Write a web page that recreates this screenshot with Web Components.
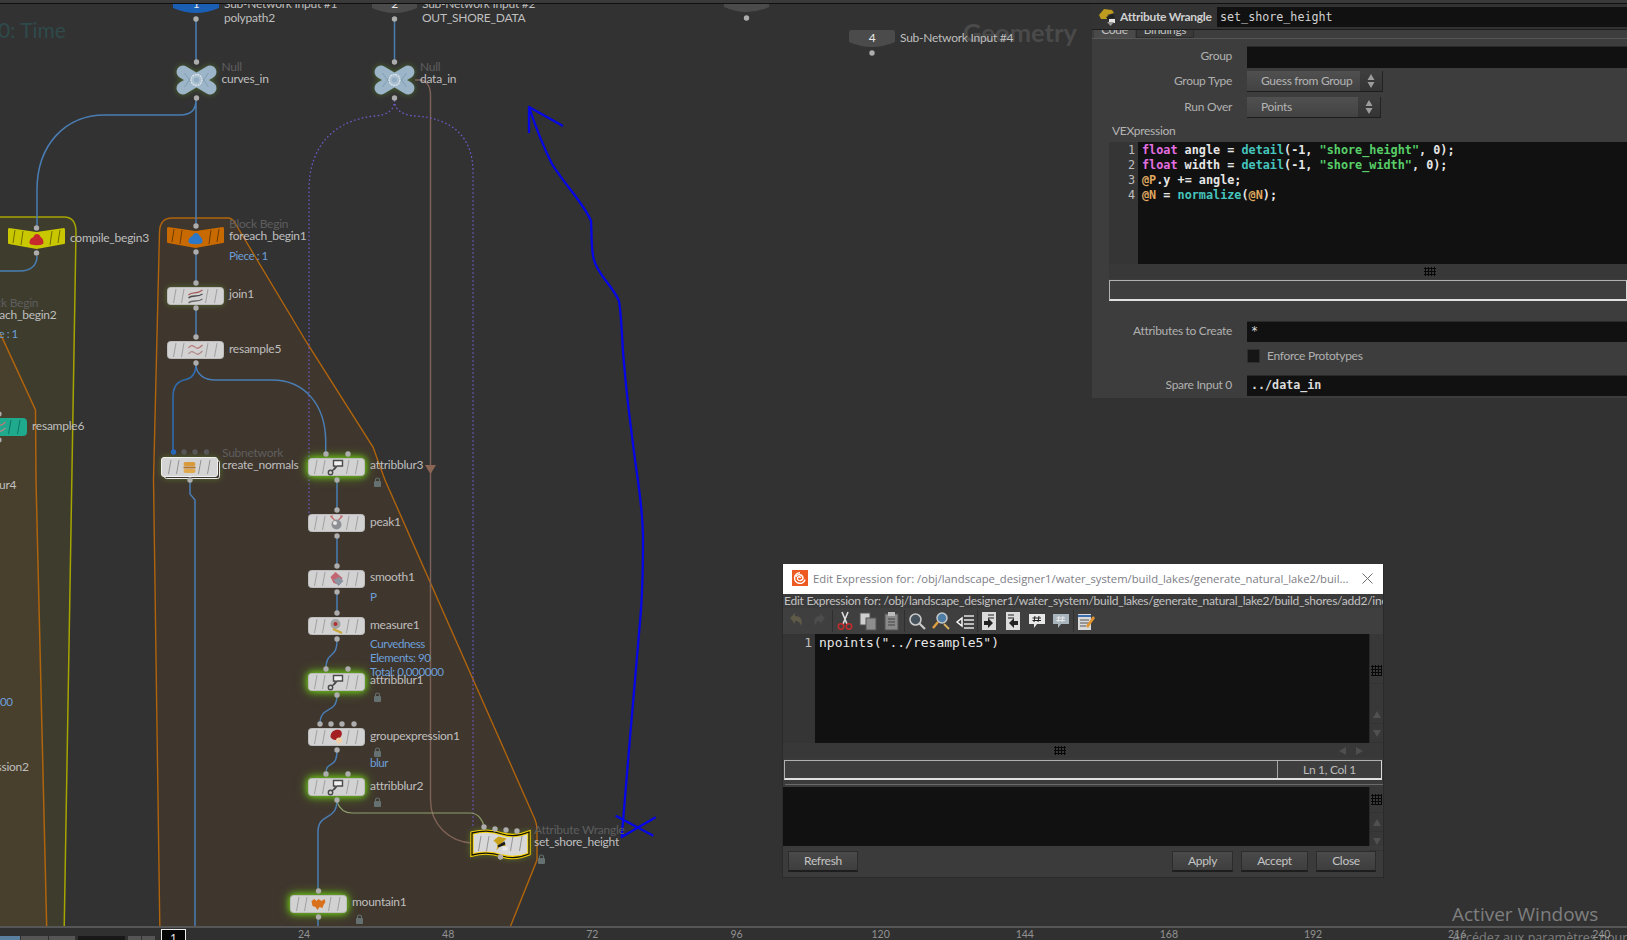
<!DOCTYPE html>
<html>
<head>
<meta charset="utf-8">
<title>Houdini network</title>
<style>
    html, body{ margin: 0; padding: 0; background: #323232; overflow: hidden; }
    body{ font-family: "Lato", "Noto Sans", sans-serif; }
    .k{ color: #e46fe0; }
    .f{ color: #45c5bd; }
    .s{ color: #58cf68; }
    .a{ color: #dfa75f; }
</style>
</head>
<body>

<hou-app>
    <hou-network slot="network">
        <hou-node x="173" y="-4" w="46" h="18" kind="input" fill="#1a5fb4" num="1" type="Sub-Network Input #1" name="polypath2" ly="22"></hou-node>
        <hou-node x="372" y="-4" w="45" h="18" kind="input" fill="#4b4b4b" num="2" type="Sub-Network Input #2" name="OUT_SHORE_DATA" ly="22"></hou-node>
        <hou-node x="724" y="-5" w="45" h="18" kind="input" fill="#4b4b4b"></hou-node>
        <hou-node x="849" y="30" w="46" h="18" kind="input" fill="#4b4b4b" num="4" name="Sub-Network Input #4" ly="8"></hou-node>

        <hou-node x="175.5" y="65" w="41" h="30" kind="null" type="Null" name="curves_in" ly="14" in="20.5:-3" out="20.5:33" glow="1"></hou-node>
        <hou-node x="374" y="65" w="41" h="30" kind="null" type="Null" name="data_in" ly="14" in="20.5:-3" out="20.5:33" glow="1"></hou-node>

        <hou-node x="8" y="227" w="57" h="21" kind="block" fill="#c9c700" icon="compile" name="compile_begin3" ly="11" in="28.5:1" out="28.5:26"></hou-node>
        <hou-node x="167" y="226" w="57" h="21" kind="block" fill="#c86a00" icon="foreach" type="Block Begin" name="foreach_begin1" ly="10" note="Piece : 1" note-y="30" in="29:0" out="29:26"></hou-node>
        <hou-node x="-83" y="305" w="57" h="21" kind="block" fill="#c86a00" type="Block Begin" name="foreach_begin2" ly="10" note="Piece : 1" note-y="29"></hou-node>

        <hou-node x="167" y="287" icon="join" name="join1" in="29" out="29:21" ly="7" glow="1"></hou-node>
        <hou-node x="167" y="341" icon="resample" name="resample5" in="29" out="29:22" ly="8"></hou-node>
        <hou-node x="-30" y="418" fill="#1fa98d" icon="resample" name="resample6" in="29" out="29" ly="8"></hou-node>

        <hou-node x="162" y="458" w="55" h="18" kind="subnet" icon="sub" type="Subnetwork" name="create_normals" ly="7" in="11.5:-6:#2467b8,22:-6:#565656,33:-6:#565656,44.5:-6:#565656" out="28:22" glow="1"></hou-node>
        <hou-node x="308" y="458" icon="blur" name="attribblur3" ly="7" in="18,40" out="29" lock glow="2"></hou-node>
        <hou-node x="308" y="514" icon="peak" name="peak1" in="29" out="29"></hou-node>
        <hou-node x="308" y="570" icon="smooth" name="smooth1" ly="7" in="29" out="29" note="P" note-y="27"></hou-node>
        <hou-node x="308" y="617" icon="measure" name="measure1" in="29" out="29" note="Curvedness|Elements: 90|Total: 0.000000" note-y="27"></hou-node>
        <hou-node x="308" y="673" icon="blur" name="attribblur1" ly="7" in="18,40" out="29" lock glow="2"></hou-node>
        <hou-node x="308" y="728" icon="group" name="groupexpression1" in="12,23,34,46" out="29" lock note="blur" note-y="35"></hou-node>
        <hou-node x="308" y="778" icon="blur" name="attribblur2" ly="7.5" in="18,40" out="29" lock glow="2"></hou-node>
        <hou-node x="-99" y="477" icon="blur" name="attribblur4"></hou-node>
        <hou-node x="-123" y="650" name="measure2" note="Total: 0.000000" note-y="52"></hou-node>
        <hou-node x="-123" y="759" name="groupexpression2"></hou-node>

        <hou-node x="290" y="895" icon="mountain" name="mountain1" ly="7" in="28.5" out="28.5" lock glow="2"></hou-node>
        <hou-node x="472" y="834" h="19" kind="wrangle" icon="wrangle" type="Attribute Wrangle" name="set_shore_height" ly="8" in="12:-7,23:-5,34:-4,45:-3" out="28.5:23" lock glow="1"></hou-node>
    </hou-network>

    <hou-params slot="overlay" kind="Attribute Wrangle" name="set_shore_height">
        <hou-row label="Group" lift style="margin-top:7px"><hou-input style="height:22px"></hou-input></hou-row>
        <hou-row label="Group Type" style="margin-top:3px"><hou-dropdown value="Guess from Group" width="136"></hou-dropdown></hou-row>
        <hou-row label="Run Over" style="margin-top:5px"><hou-dropdown value="Points" width="134"></hou-dropdown></hou-row>
        <hou-row label="VEXpression" plain style="margin-top:6px"></hou-row>
        <hou-code lines="4" gutter="29" size="11.8" bold height="122" left="17" style="margin-top:4px">
<span class="k">float</span> angle = <span class="f">detail</span>(-1, <span class="s">"shore_height"</span>, 0);
<span class="k">float</span> width = <span class="f">detail</span>(-1, <span class="s">"shore_width"</span>, 0);
<span class="a">@P</span>.y += angle;
<span class="a">@N</span> = <span class="f">normalize</span>(<span class="a">@N</span>);</hou-code>
        <hou-hbar style="margin-left:17px" grip="315"></hou-hbar>
        <hou-status style="margin:1px 0 0 17px;height:21px"></hou-status>
        <hou-row label="Attributes to Create" style="margin-top:20px"><hou-input value="*" style="height:21px"></hou-input></hou-row>
        <hou-row style="margin-top:6px"><hou-check label="Enforce Prototypes"></hou-check></hou-row>
        <hou-row label="Spare Input 0" style="margin-top:11px"><hou-input value="../data_in" bold style="height:21px"></hou-input></hou-row>
    </hou-params>

    <hou-dialog slot="overlay" title="Edit Expression for: /obj/landscape_designer1/water_system/build_lakes/generate_natural_lake2/buil...">
        <div style="height:14px;line-height:14px;font-size:12px;letter-spacing:-.25px;color:#c2c2c2;padding-left:1px;white-space:nowrap;overflow:hidden">Edit Expression for: /obj/landscape_designer1/water_system/build_lakes/generate_natural_lake2/build_shores/add2/inc</div>
        <hou-toolbar></hou-toolbar>
        <hou-code lines="1" gutter="32" size="13" height="109" left="4" scroll>npoints("../resample5")</hou-code>
        <hou-hbar grip="271" arrows></hou-hbar>
        <hou-status style="margin:2px 1px 0 1px;height:20px" cell="Ln 1, Col 1"></hou-status>
        <div style="height:1px;background:#6a6a6a;margin:4px 0 2px 2px"></div>
        <hou-code lines="0" gutter="0" size="13" height="59" left="4" scroll></hou-code>
        <div style="display:flex;gap:8px;padding:5px 7px 0 5px">
            <hou-button label="Refresh" width="70" style="margin-right:auto"></hou-button>
            <hou-button label="Apply" width="61"></hou-button>
            <hou-button label="Accept" width="67"></hou-button>
            <hou-button label="Close" width="60"></hou-button>
        </div>
    </hou-dialog>

    <hou-timeline slot="timeline"></hou-timeline>
    <hou-watermark slot="overlay"></hou-watermark>
</hou-app>

<script>
class HouApp extends HTMLElement{
    constructor(){
        super();
        this.$ = this.attachShadow({mode: 'open'});
        this.$.innerHTML = `
            <style>
                :host{
                    display: grid;
                    grid-template-rows: 926px 14px;
                    width: 1627px;
                    height: 940px;
                    position: relative;
                    overflow: hidden;
                    background: #323232;
                    font-size: 12px;
                    letter-spacing: -.3px;
                    color: #c2c2c2;
                }
                .top{
                    position: absolute; left: 0; right: 0; top: 0; height: 3px;
                    background: #3a3a3a;
                    border-bottom: 1px solid #101010;
                    z-index: 5;
                }
            </style>
            <slot name="network"></slot>
            <slot name="timeline"></slot>
            <slot name="overlay"></slot>
            <div class="top"></div>
        `;
    }
}

// free canvas: blocks, wires and the scribble sit in one svg, nodes are slotted above it
class HouNetwork extends HTMLElement{
    constructor(){
        super();
        this.$ = this.attachShadow({mode: 'open'});
        const blue = 'fill="none" stroke="#4a7db4" stroke-width="1.5"';
        this.$.innerHTML = `
            <style>
                :host{ display: block; position: relative; overflow: hidden; height: 926px; }
                svg{ position: absolute; left: 0; top: 0; }
                .ctx{ position: absolute; white-space: nowrap; line-height: 1; letter-spacing: 0; }
                .time{ left: -2px; top: 19px; font-size: 21px; color: #2e4a4b; }
                .geo{ left: 963px; top: 20px; font-size: 25.5px; font-weight: 700; color: #4a4a4a; }
            </style>
            <svg width="1627" height="926">
                <path d="M-9 217H64Q76 217 76 232L72 470L64 940H-9Z" fill="#3d3c2d" stroke="#a6a500" stroke-width="1.5"/>
                <path d="M-9 322L0 333L35.5 410L36 480L47 940H-9Z" fill="#493f2d" stroke="#b0640c" stroke-width="1.5"/>
                <path d="M172 218H228Q232 218 235 223L307 343L373 447L385 480L533 815Q537 823 537 830V860L505 940H160L153.5 480L159.5 232Q160 218 172 218Z" fill="#3f362d" stroke="#b0640c" stroke-width="1.4"/>

                <path d="M415 80H420C426 80 430.5 86 430.5 95V800C430.5 825 450 842 472 843" fill="none" stroke="#7f6257" stroke-width="1.4"/>
                <path d="M425 465H436L430.5 474Z" fill="#8b6655"/>
                <path d="M394.5 100C394.5 112 385 115 375 116C335 120 309 145 309 190V516M394.5 100C394.5 112 405 115 415 116C450 118 473 135 473 172V828" fill="none" stroke="#7059c8" stroke-width="1.3" stroke-dasharray="1.6 2.4"/>
                <path d="M337 802C340 810 345 813 352 813H470C478 813 483 820 484 827" fill="none" stroke="#8f9f6a" stroke-width="1.2"/>

                <path d="M196 19V62M394.5 19V62M196 98V226M196 100C196 110 190 115 180 115H105C65 115 37 145 37 190V228" ${blue}/>
                <path d="M37 256C37 266 30 271 20 271H-5M196 253V282M196 308V337" ${blue}/>
                <path d="M196 364C196 375 190 379 184 380C176 382 173 388 173 397V452" fill="none" stroke="#2f6cb0" stroke-width="1.6"/>
                <path d="M196 364C196 375 205 380 215 380H272C305 380 325 405 325.7 440V454" ${blue}/>
                <path d="M337 480V510M337 536V566M337 592V613M337 640C337 660 326 650 326 669M337 695C337 715 320 705 320 724M337 750C337 770 326 760 326 773M337 800C337 822 318 812 318 832V891M318 917V930M190 480V494L195 500V930" ${blue}/>

                <path d="M563 126L529 107L529 133M529 107C535 125 545 150 552 164C565 185 585 205 591 221C592 240 591 250 594 260C598 275 612 285 619 301C622 320 622 345 624 363C627 400 631 430 636 467C641 500 643 520 643 540C643 570 642 600 640 622C637 660 634 690 631 726L621.7 837L655.7 817.3M615.7 815.7L653.3 835.7" fill="none" stroke="#0606e6" stroke-width="2.3" stroke-linejoin="round"/>
            </svg>
            <div class="ctx time">0: Time</div>
            <div class="ctx geo">Geometry</div>
            <slot></slot>
        `;
    }
}

const NODE_ICONS = {
    blur: `<path d="M-3 -6.5h9v5.5h-5.5l-2 2.5v-2.5h-1.5z" fill="#f0f0f0" stroke="#4a4a4a" stroke-width="1.4"/><circle cx="-6" cy="5.5" r="2.2" fill="none" stroke="#4a4a4a" stroke-width="1.4"/><path d="M-4.4 4L-1.5 1" stroke="#4a4a4a" stroke-width="1.6"/>`,
    peak: `<circle cx="0" cy="1.5" r="5" fill="#8d8f94"/><circle cx="-1.5" cy="0" r="2" fill="#e6e6e6"/><path d="M-2 -3L-6 -7M2 -3L6 -7M-6 -7h2.5M6 -7h-2.5" stroke="#c26a6a" stroke-width="1.2" fill="none"/>`,
    smooth: `<path d="M-6 -2L-1 -7L6 -1L3 6L-3 4Z" fill="#c26671"/><path d="M-3 1L3 -2L7 2L2 7Z" fill="#8b95a0"/>`,
    measure: `<circle cx="-1" cy="-2" r="5" fill="#a3a3a3"/><circle cx="-1" cy="-2" r="2" fill="#b03030"/><path d="M-3 2L6 6L5 8L-4 4Z" fill="#c9a53a"/>`,
    group: `<path d="M-6 0C-6 -6 -1 -8 3 -7C6 -6 6 -2 4 0C2 4 -4 4 -6 0Z" fill="#a31f22"/><circle cx="2.5" cy="3.5" r="3" fill="#f1cfa6"/>`,
    mountain: `<path d="M-7 -3L-4 -5L-2 -3L0 -5L3 -3L6 -5L7 -2L5 1L4 4L1 3L-1 6L-3 3L-6 2Z" fill="#d8701c"/>`,
    join: `<path d="M-7 -1C-3 -5 1 -1 7 -6" fill="none" stroke="#a85a5a" stroke-width="1.2"/><path d="M-7 2C-3 -2 2 2 7 -2" fill="none" stroke="#4c4c4c" stroke-width="1.3"/><path d="M-7 7C-3 3 2 7 7 3" fill="none" stroke="#6a6a6a" stroke-width="1.3"/>`,
    resample: `<path d="M-7 -2C-4 -7 -1 -3 1 -2C3 -1 5 -3 7 -5" fill="none" stroke="#b87878" stroke-width="1.2"/><path d="M-7 4C-4 -1 -1 3 1 4C3 5 5 3 7 1" fill="none" stroke="#b08a8a" stroke-width="1.2"/>`,
    sub: `<rect x="-6" y="-5" width="12" height="4" rx="2" fill="#d99a3a"/><rect x="-6" y="-.5" width="12" height="2" fill="#b7762a"/><rect x="-6" y="2" width="12" height="4" rx="2" fill="#e0a94c"/>`,
    wrangle: `<path d="M-7 -3L-2 -7L6 -5L2 -1L6 3L0 2L-4 7L-3 1Z" fill="#c9a21c"/><path d="M-3 2L4 -2L5 1L-2 4Z" fill="#1c1c1c"/><path d="M2 3h5v4h-5z" fill="#e9e9e9"/>`,
    compile: `<path d="M-7 4C-7 0 -5 -1 -3 -2C-2 -6 3 -6 4 -2C6 -1 7 1 7 4C7 7 -7 7 -7 4Z" fill="#c72a2c"/>`,
    foreach: `<path d="M-7 4C-7 0 -5 -1 -3 -2C-2 -6 3 -6 4 -2C6 -1 7 1 7 4C7 7 -7 7 -7 4Z" fill="#2d77c9"/>`
};

class HouNode extends HTMLElement{
    constructor(){
        super();
        this.$ = this.attachShadow({mode: 'open'});
    }

    connectedCallback(){
        const x = +this.getAttribute('x'), y = +this.getAttribute('y');
        const w = +(this.getAttribute('w') || 57), h = +(this.getAttribute('h') || 18);
        const kind = this.getAttribute('kind') || 'op';
        const glow = this.getAttribute('glow') || '0';
        const name = this.getAttribute('name') || '';
        const type = this.getAttribute('type');
        const note = this.getAttribute('note');
        const ly = this.hasAttribute('ly') ? +this.getAttribute('ly') : h / 2 - 1;
        const noteY = +(this.getAttribute('note-y') || 30);

        this.style.left = x + 'px';
        this.style.top = y + 'px';

        const filter = {
            0: 'none',
            1: 'drop-shadow(0 0 3px rgba(110,170,40,.45))',
            2: 'drop-shadow(0 0 3px #6fc41c) drop-shadow(0 0 5px #5fa818)'
        }[glow];

        let dots = '';
        (this.getAttribute('in') || '').split(',').filter(s => s).forEach(s => {
            const p = s.split(':');
            dots += `<circle cx="${p[0]}" cy="${p[1] || -4}" r="2.7" fill="${p[2] || '#adadad'}"/>`;
        });
        const out = this.getAttribute('out');
        if(out){
            const p = out.split(':');
            dots += `<circle cx="${p[0]}" cy="${p[1] || h + 4}" r="2.7" fill="#adadad"/>`;
        } else if(kind === 'input'){
            dots += `<circle cx="${w / 2}" cy="${h + 5}" r="2.7" fill="#adadad"/>`;
        }

        const icon = NODE_ICONS[this.getAttribute('icon')] || '';
        const cy = kind === 'block' ? 12 : h / 2;
        const iconPart = `<g transform="translate(${w / 2} ${cy})">${icon}</g>`;

        this.$.innerHTML = `
            <style>
                :host{ display: block; position: absolute; width: ${w}px; height: ${h}px; letter-spacing: -.25px; }
                svg{ position: absolute; left: 0; top: 0; overflow: visible; }
                .body{ filter: ${filter}; }
                span{ position: absolute; left: ${w + 5}px; white-space: nowrap; transform: translateY(-50%); line-height: 14px; }
                .name{ top: ${ly}px; color: #bfbfbf; }
                .type{ top: ${ly - 12.5}px; color: ${kind === 'input' ? '#bfbfbf' : '#5e5e5e'}; }
                .type.input{ top: ${ly - 14}px; }
                .note{ color: #6c9fd8; font-size: 11.6px; letter-spacing: -.45px; }
                .num{ left: 0; width: ${w}px; text-align: center; color: #e8e8e8; top: ${h / 2 - 1}px; }
            </style>
            <svg width="${w}" height="${h}">
                <g class="body">${this._shape(kind, w, h)}</g>
                ${iconPart}
                ${dots}
                ${this.hasAttribute('lock') ? `<g transform="translate(66 ${h + 2})" fill="#657070"><rect x="0" y="3" width="7" height="6" rx="1"/><path d="M1.5 3.5v-1.5a2 2 0 0 1 4 0v1.5" fill="none" stroke="#657070" stroke-width="1.1"/></g>` : ''}
            </svg>
            ${this.hasAttribute('num') ? `<span class="num">${this.getAttribute('num')}</span>` : ''}
            ${type ? `<span class="type ${kind === 'input' ? 'input' : ''}">${type}</span>` : ''}
            ${name ? `<span class="name">${name}</span>` : ''}
            ${note ? note.split('|').map((t, i) => `<span class="note" style="top:${noteY + i * 14}px">${t}</span>`).join('') : ''}
        `;
    }

    _stripes(w, h, color){
        const t = 2, b = h - 2;
        return [9, 17, w - 16, w - 7].map(s => `M${s} ${t}L${s - 2.5} ${b}`).join('')
            .replace(/^/, `<path stroke="${color}" stroke-width=".9" fill="none" d="`) + '"/>';
    }

    _shape(kind, w, h){
        const fill = this.getAttribute('fill');
        if(kind === 'input'){
            return `<path d="M2 0H${w - 2}Q${w} 0 ${w} 3V${h - 6}Q${w / 2} ${h + 4} 0 ${h - 6}V3Q0 0 2 0Z" fill="${fill}"/>`;
        }
        if(kind === 'null'){
            const m = w / 2, n = h / 2;
            return `<g stroke="#9cb5c8" stroke-width="13" stroke-linecap="round"><path d="M7 7L${w - 7} ${h - 7}M${w - 7} 7L7 ${h - 7}"/></g>
                <path d="M${m - 12} ${n - 7}L${m - 5} ${n + 3}M${m + 12} ${n - 7}L${m + 5} ${n + 3}M${m - 12} ${n + 7}L${m - 5} ${n - 3}M${m + 12} ${n + 7}L${m + 5} ${n - 3}" stroke="#7c95a9" stroke-width=".8"/>
                <circle cx="${m}" cy="${n}" r="5.5" fill="#a9c0d1" stroke="#dde5ea" stroke-width="1.4" stroke-dasharray="2 .6"/>
                <circle cx="${m}" cy="${n}" r="2.6" fill="#93adc2"/>`;
        }
        if(kind === 'block'){
            return `<path d="M1 1L${w / 2} 5L${w - 1} 1Q${w} 1 ${w} 3V16Q${w} 17 ${w - 1} 17L${w / 2} 22L1 17Q0 17 0 16V3Q0 1 1 1Z" fill="${fill}"/>
                <path d="M7 3L5 16M15 4L13 18M${w - 13} 4L${w - 15} 18M${w - 5} 3L${w - 7} 16" stroke="rgba(0,0,0,.45)" fill="none"/>`;
        }
        if(kind === 'wrangle'){
            const wave = `M0 -1C12 -4 22 -3 30 0C40 3 50 1 ${w} -2V${h + 1}C50 ${h + 4} 40 ${h + 6} 30 ${h + 3}C22 ${h} 12 ${h - 1} 0 ${h + 2}Z`;
            return `<path d="${wave}" fill="#d8d8d8" stroke="#f2d000" stroke-width="3.4"/><path d="${wave}" fill="none" stroke="#111" stroke-width="1.3"/>
                ${this._stripes(w, h, '#8c8c8c')}`;
        }
        if(kind === 'subnet'){
            return `<rect x="2.5" y="2.5" width="${w}" height="${h}" rx="2" fill="#3f362d" stroke="#e8e8e8" stroke-width="1"/>
                <rect x="-.5" y="-.5" width="${w + 1}" height="${h + 1}" rx="2.5" fill="#d4d4d4" stroke="#f0f0f0"/>
                ${this._stripes(w, h, '#8a8a8a')}`;
        }
        return `<rect x=".5" y=".5" width="${w - 1}" height="${h - 1}" rx="3" fill="${fill || '#d2d2d2'}" stroke="${fill ? fill : '#bdbdbd'}"/>
            ${this._stripes(w, h, fill ? '#0d6e5c' : '#9a9a9a')}`;
    }
}

class HouParams extends HTMLElement{
    constructor(){
        super();
        this.$ = this.attachShadow({mode: 'open'});
    }

    connectedCallback(){
        this.$.innerHTML = `
            <style>
                :host{
                    display: flex; flex-direction: column;
                    position: absolute; left: 1092px; top: 4px; width: 535px; height: 394px;
                    background: #3d3d3d;
                    color: #b8b8b8;
                }
                header{ display: flex; align-items: center; height: 26px; flex: none; background: #333; border-bottom: 1px solid #1c1c1c; box-sizing: border-box; }
                header svg{ margin: 0 3px 0 6px; flex: none; }
                header b{ font-size: 12px; color: #cfcfcf; white-space: nowrap; width: 97px; letter-spacing: -.3px; }
                header div{ flex: 1; height: 20px; background: #111; color: #d2d2d2; font: 11.7px/20px "DejaVu Sans Mono", monospace; padding-left: 3px; letter-spacing: 0; }
                nav{ display: flex; height: 8px; flex: none; padding-left: 2px; overflow: hidden; border-bottom: 1px solid #565656; }
                nav span{ width: 41px; height: 8px; line-height: 0; text-align: center; font-size: 12px; background: #4a4a4a; color: #c0c0c0; }
                nav span + span{ width: 58px; margin-left: 1px; background: #393939; border: 1px solid #2c2c2c; border-top: 0; box-sizing: border-box; }
            </style>
            <header>
                <svg width="19" height="20" viewBox="0 0 19 20">
                    <path d="M1 8L6 2L14 3L16 6L9 8L14 11L9 12L3 12Z" fill="#bd9c20"/>
                    <path d="M8 10L15 7L17 10L10 13Z" fill="#222"/>
                    <path d="M11 12h6v4h-6z" fill="#e6e6e6"/>
                    <path d="M9 15h7l-3.5 4Z" fill="#999"/>
                </svg>
                <b>${this.getAttribute('kind')}</b>
                <div>${this.getAttribute('name')}</div>
            </header>
            <nav><span>Code</span><span>Bindings</span></nav>
            <section><slot></slot></section>
        `;
    }
}

class HouRow extends HTMLElement{
    constructor(){
        super();
        this.$ = this.attachShadow({mode: 'open'});
    }

    connectedCallback(){
        const label = this.getAttribute('label') || '';
        if(this.hasAttribute('plain')){
            this.$.innerHTML = `
                <style>:host{ display: block; height: 14px; line-height: 14px; padding-left: 20px; color: #b4b4b4; }</style>
                <span>${label}</span>`;
            return;
        }
        this.$.innerHTML = `
            <style>
                :host{ display: grid; grid-template-columns: 140px 1fr; column-gap: 15px; align-items: center; color: #b0b0b0; }
                label{ text-align: right; white-space: nowrap; padding-bottom: ${this.hasAttribute('lift') ? 4 : 2}px; }
            </style>
            <label>${label}</label>
            <slot></slot>
        `;
    }
}

class HouInput extends HTMLElement{
    constructor(){
        super();
        this.$ = this.attachShadow({mode: 'open'});
    }

    connectedCallback(){
        const bold = this.hasAttribute('bold');
        this.$.innerHTML = `
            <style>
                :host{ display: block; background: #111; border-top: 1px solid #2a2a2a; box-sizing: border-box; letter-spacing: 0; }
                div{ font: ${bold ? 'bold' : 'normal'} 11.7px/19px "DejaVu Sans Mono", monospace; color: #dcdcdc; padding-left: 4px; }
            </style>
            <div>${this.getAttribute('value') || ''}</div>
        `;
    }
}

class HouDropdown extends HTMLElement{
    constructor(){
        super();
        this.$ = this.attachShadow({mode: 'open'});
    }

    connectedCallback(){
        this.$.innerHTML = `
            <style>
                :host{
                    display: flex; width: ${this.getAttribute('width')}px; height: 21px; box-sizing: border-box;
                    background: linear-gradient(#505050, #424242);
                    border-bottom: 1px solid #1d1d1d; border-right: 1px solid #232323;
                    color: #b4b4b4;
                }
                span{ flex: 1; padding-left: 14px; line-height: 19px; white-space: nowrap; }
                i{ width: 22px; flex: none; background: linear-gradient(#3e3e3e, #343434); display: flex; align-items: center; justify-content: center; }
            </style>
            <span>${this.getAttribute('value')}</span>
            <i><svg width="8" height="16"><path d="M4 1L7.5 7H.5ZM4 15L7.5 9H.5Z" fill="#9c9c9c"/></svg></i>
        `;
    }
}

// editor with a line gutter; the code lines come through the slot
class HouCode extends HTMLElement{
    constructor(){
        super();
        this.$ = this.attachShadow({mode: 'open'});
    }

    connectedCallback(){
        const count = +this.getAttribute('lines');
        const gutter = +this.getAttribute('gutter');
        const left = +(this.getAttribute('left') || 0);
        const nums = Array.from({length: count}, (_, i) => `<div>${i + 1}</div>`).join('');
        // the first newline is only there to keep the markup readable
        if(this.firstChild && this.firstChild.nodeType === 3)
            this.firstChild.textContent = this.firstChild.textContent.replace(/^\s*\n/, '');
        this.$.innerHTML = `
            <style>
                :host{
                    display: flex; height: ${this.getAttribute('height')}px; margin-left: ${left > 10 ? left : 0}px;
                    font: ${this.hasAttribute('bold') ? 'bold' : 'normal'} ${this.getAttribute('size')}px/15px "DejaVu Sans Mono", monospace;
                    letter-spacing: 0;
                    color: #e6e6e6; background: #353535;
                }
                .gutter{ width: ${gutter}px; flex: none; box-sizing: border-box; padding: 1px 3px 0 0; text-align: right; color: #bdbdbd; font-weight: normal; }
                .text{ flex: 1; min-width: 0; background: #111; white-space: pre; padding: 1px 0 0 4px; overflow: hidden; }
                .scroll{ width: 14px; flex: none; display: flex; flex-direction: column; background: #383838; border-left: 1px solid #2a2a2a; box-sizing: border-box; }
                .scroll > *{ flex: none; }
                .grip{ height: 25px; display: flex; align-items: center; justify-content: center; border-bottom: 1px solid #333; }
                .dots{ width: 11px; height: 11px; background: radial-gradient(circle, #080808 1px, transparent 1.2px) 0 0 / 3px 3px; }
                .arrow{ height: 18px; display: flex; align-items: center; justify-content: center; color: #505050; border-bottom: 1px solid #333; }
            </style>
            ${gutter ? `<div class="gutter">${nums}</div>` : ''}
            <div class="text"><slot></slot></div>
            ${this.hasAttribute('scroll') ? `<div class="scroll">
                <div class="grip" style="margin-top:${count ? 24 : 0}px"><div class="dots"></div></div>
                <div style="flex:1"></div>
                <div class="arrow"><svg width="8" height="7"><path d="M4 0L8 7H0Z" fill="#505050"/></svg></div>
                <div class="arrow"><svg width="8" height="7"><path d="M4 7L8 0H0Z" fill="#505050"/></svg></div>
            </div>` : ''}
        `;
    }
}

class HouHbar extends HTMLElement{
    constructor(){
        super();
        this.$ = this.attachShadow({mode: 'open'});
    }

    connectedCallback(){
        this.$.innerHTML = `
            <style>
                :host{ display: flex; height: 15px; background: #383838; position: relative; align-items: center; }
                .dots{ margin-left: ${this.getAttribute('grip')}px; width: 12px; height: 9px; background: radial-gradient(circle, #080808 1px, transparent 1.2px) 0 0 / 3px 3px; }
                .arrows{ margin-left: auto; display: flex; gap: 10px; padding-right: 19px; }
            </style>
            <div class="dots"></div>
            ${this.hasAttribute('arrows') ? `<div class="arrows">
                <svg width="8" height="8"><path d="M1 4L8 0V8Z" fill="#4e4e4e"/></svg>
                <svg width="8" height="8"><path d="M7 4L0 0V8Z" fill="#4e4e4e"/></svg>
            </div>` : ''}
        `;
    }
}

class HouStatus extends HTMLElement{
    constructor(){
        super();
        this.$ = this.attachShadow({mode: 'open'});
    }

    connectedCallback(){
        const cell = this.getAttribute('cell');
        this.$.innerHTML = `
            <style>
                :host{ display: flex; box-sizing: border-box; background: #3e3e3e; border: 1px solid #b0b0b0; border-bottom: 2px solid #e0e0e0; border-right-color: #d8d8d8; }
                div{ flex: 1; }
                span{ width: 103px; flex: none; text-align: center; line-height: 17px; border-left: 1px solid #a8a8a8; color: #bcbcbc; }
            </style>
            <div></div>
            ${cell ? `<span>${cell}</span>` : ''}
        `;
    }
}

class HouCheck extends HTMLElement{
    constructor(){
        super();
        this.$ = this.attachShadow({mode: 'open'});
    }

    connectedCallback(){
        this.$.innerHTML = `
            <style>
                :host{ display: flex; align-items: center; gap: 7px; height: 16px; color: #b0b0b0; }
                i{ width: 13px; height: 14px; background: #161616; border: 1px solid #2e2e2e; box-sizing: border-box; }
                span{ padding-bottom: 2px; }
            </style>
            <i></i><span>${this.getAttribute('label')}</span>
        `;
    }
}

class HouDialog extends HTMLElement{
    constructor(){
        super();
        this.$ = this.attachShadow({mode: 'open'});
    }

    connectedCallback(){
        this.$.innerHTML = `
            <style>
                :host{
                    display: flex; flex-direction: column;
                    position: absolute; left: 782px; top: 564px; width: 602px; height: 314px; box-sizing: border-box;
                    background: #3b3b3b;
                    border: 1px solid #2a2a2a; border-top: 0;
                    color: #c2c2c2;
                }
                .title{ display: flex; align-items: center; height: 30px; flex: none; box-sizing: border-box; padding-bottom: 2px; background: #fff; color: #7d7d86; font-family: "Open Sans", sans-serif; font-size: 11.25px; letter-spacing: 0; white-space: nowrap; overflow: hidden; }
                .title svg{ flex: none; }
                .title span{ margin-left: 5px; }
                .x{ margin-left: auto; margin-right: 10px; }
            </style>
            <div class="title">
                <svg style="margin-left:9px" width="16" height="16" viewBox="0 0 16 16">
                    <rect width="16" height="16" fill="#ee5a24"/>
                    <path d="M13 9.5A5.3 5.3 0 1 1 8 2.8M3.8 6.8A3.8 3.8 0 0 1 11 8.5A3 3 0 0 1 5.5 9A1.6 1.6 0 0 1 8.6 8" fill="none" stroke="#fff" stroke-width="1.4"/>
                </svg>
                <span>${this.getAttribute('title')}</span>
                <svg class="x" width="11" height="11"><path d="M.5 .5L10.5 10.5M10.5 .5L.5 10.5" stroke="#6e6e6e" stroke-width="1"/></svg>
            </div>
            <slot></slot>
        `;
    }
}

const TOOL_ICONS = [
    `<path d="M4 7L9 2V5C15 5 17 9 15 15C14 11 12 10 9 10V13Z" fill="#5f5a48"/>`,
    `<path d="M15 7L10 2V5C5 5 3 9 5 15C6 11 8 10 10 10V13Z" fill="#4c4c4c"/>`,
    0,
    `<path d="M7 1L12 13M13 1L8 13" stroke="#ddd" stroke-width="1.6"/><circle cx="6" cy="15.5" r="2.7" fill="none" stroke="#c62c2c" stroke-width="1.5"/><circle cx="14" cy="15.5" r="2.7" fill="none" stroke="#c62c2c" stroke-width="1.5"/>`,
    `<rect x="2" y="2" width="10" height="12" fill="#cfcfcf" stroke="#555"/><rect x="8" y="7" width="10" height="12" fill="#8d8d8d" stroke="#555"/>`,
    `<rect x="3" y="3" width="13" height="16" fill="#8a8a8a" stroke="#555"/><rect x="6" y="1" width="7" height="4" fill="#bbb"/><path d="M6 8h7M6 11h7M6 14h7" stroke="#444"/>`,
    0,
    `<circle cx="8.5" cy="8.5" r="5.5" fill="#46525c" stroke="#c9c9c9" stroke-width="1.6"/><path d="M12.5 12.5L18 18" stroke="#c9c9c9" stroke-width="2.2"/>`,
    `<circle cx="11" cy="7" r="5" fill="#4e7ea6" stroke="#c9c9c9" stroke-width="1.5"/><path d="M7 11L2 17" stroke="#e0a040" stroke-width="2.4"/><path d="M13 13L18 18" stroke="#d8b060" stroke-width="2"/>`,
    `<path d="M9 5h10M9 9h10M9 13h10M9 17h10" stroke="#e4e4e4" stroke-width="1.6"/><path d="M2 11L7 7V15Z" fill="none" stroke="#fff" stroke-width="1.4"/>`,
    0,
    `<rect x="3" y="1" width="14" height="18" fill="#dcdcdc"/><path d="M9 4h6M9 7h6" stroke="#222" stroke-width="1.2"/><path d="M5 10H9V7L14 12L9 17V14H5Z" fill="#222"/>`,
    `<rect x="3" y="1" width="14" height="18" fill="#dcdcdc"/><path d="M5 4h6M5 7h6" stroke="#222" stroke-width="1.2"/><path d="M15 10H11V7L6 12L11 17V14H15Z" fill="#222"/>`,
    `<path d="M2 3H18V13H10L7 17V13H2Z" fill="#e8e8e8"/><path d="M8 5L7 11M12 5L11 11M5.5 7H14M5.5 9.5H14" stroke="#222" stroke-width="1"/>`,
    `<path d="M2 3H18V13H10L7 17V13H2Z" fill="#a9b5bd"/><path d="M8 5L7 11M12 5L11 11M5.5 7H14M5.5 9.5H14" stroke="#e8e8e8" stroke-width="1"/>`,
    0,
    `<rect x="2" y="3" width="13" height="16" fill="#d9d9d9"/><path d="M2 5h13" stroke="#3b6fb0" stroke-width="2"/><path d="M4 9h9M4 12h9M4 15h6" stroke="#555"/><path d="M10 15L17 5L19 7L12 17Z" fill="#e09530"/>`
];

class HouToolbar extends HTMLElement{
    constructor(){
        super();
        this.$ = this.attachShadow({mode: 'open'});
        const items = TOOL_ICONS.map(icon => icon
            ? `<button><svg width="20" height="20" viewBox="0 0 20 20">${icon}</svg></button>`
            : `<hr>`).join('');
        this.$.innerHTML = `
            <style>
                :host{ display: flex; align-items: center; height: 26px; flex: none; padding-left: 1.2px; background: #3f3f3f; box-sizing: border-box; }
                button{ width: 23.8px; height: 24px; padding: 0; border: 0; background: none; display: flex; align-items: center; justify-content: center; }
                hr{ width: 1px; height: 22px; margin: 0; border: 0; background: #2f2f2f; flex: none; }
            </style>
            ${items}
        `;
    }
}

class HouButton extends HTMLElement{
    constructor(){
        super();
        this.$ = this.attachShadow({mode: 'open'});
    }

    connectedCallback(){
        this.$.innerHTML = `
            <style>
                :host{
                    display: block; width: ${this.getAttribute('width')}px; height: 21px; box-sizing: border-box;
                    background: linear-gradient(#4a4a4a, #3e3e3e);
                    border: 1px solid #2c2c2c; border-bottom: 2px solid #1e1e1e;
                    text-align: center; line-height: 17px; color: #c4c4c4;
                }
            </style>
            ${this.getAttribute('label')}
        `;
    }
}

class HouTimeline extends HTMLElement{
    constructor(){
        super();
        this.$ = this.attachShadow({mode: 'open'});
        const ticks = [24, 48, 72, 96, 120, 144, 168, 192, 216, 240].map(t => `<span>${t}</span>`).join('');
        this.$.innerHTML = `
            <style>
                :host{ display: flex; height: 14px; box-sizing: border-box; background: #303030; border-top: 2px solid #565656; overflow: hidden; font-size: 10.5px; letter-spacing: 0; color: #929292; }
                .ctl{ display: flex; gap: 1px; width: 155px; height: 4px; margin-top: 8px; flex: none; }
                .ctl i{ background: #555; }
                .frame{ width: 25px; height: 14px; margin: 1px 0 0 6px; flex: none; box-sizing: border-box; background: #060606; border: 1px solid #eee; color: #eee; text-align: center; font-size: 11px; line-height: 16px; }
                .ruler{ display: flex; margin-left: 46px; line-height: 12px; }
                .ruler span{ width: 144.15px; flex: none; text-align: center; }
            </style>
            <div class="ctl">
                <i style="width:20px;background:#5a80a0"></i><i style="width:27px"></i><i style="width:26px;margin-right:2px"></i>
                <i style="width:48px;background:#181818;margin-right:2px"></i><i style="width:13px"></i><i style="width:13px"></i>
            </div>
            <div class="frame">1</div>
            <div class="ruler">${ticks}</div>
        `;
    }
}

class HouWatermark extends HTMLElement{
    constructor(){
        super();
        this.$ = this.attachShadow({mode: 'open'});
        this.$.innerHTML = `
            <style>
                :host{ position: absolute; left: 1452px; top: 900px; white-space: nowrap; color: rgba(205,205,205,.5); font-family: "Open Sans", sans-serif; letter-spacing: 0; }
                div{ font-size: 19px; line-height: 28px; }
                p{ margin: 0; font-size: 12.6px; line-height: 19px; }
            </style>
            <div>Activer Windows</div>
            <p>Accédez aux paramètres pour activer Windows.</p>
        `;
    }
}

customElements.define('hou-app', HouApp);
customElements.define('hou-network', HouNetwork);
customElements.define('hou-node', HouNode);
customElements.define('hou-params', HouParams);
customElements.define('hou-row', HouRow);
customElements.define('hou-input', HouInput);
customElements.define('hou-dropdown', HouDropdown);
customElements.define('hou-code', HouCode);
customElements.define('hou-hbar', HouHbar);
customElements.define('hou-status', HouStatus);
customElements.define('hou-check', HouCheck);
customElements.define('hou-dialog', HouDialog);
customElements.define('hou-toolbar', HouToolbar);
customElements.define('hou-button', HouButton);
customElements.define('hou-timeline', HouTimeline);
customElements.define('hou-watermark', HouWatermark);
</script>
</body>
</html>
